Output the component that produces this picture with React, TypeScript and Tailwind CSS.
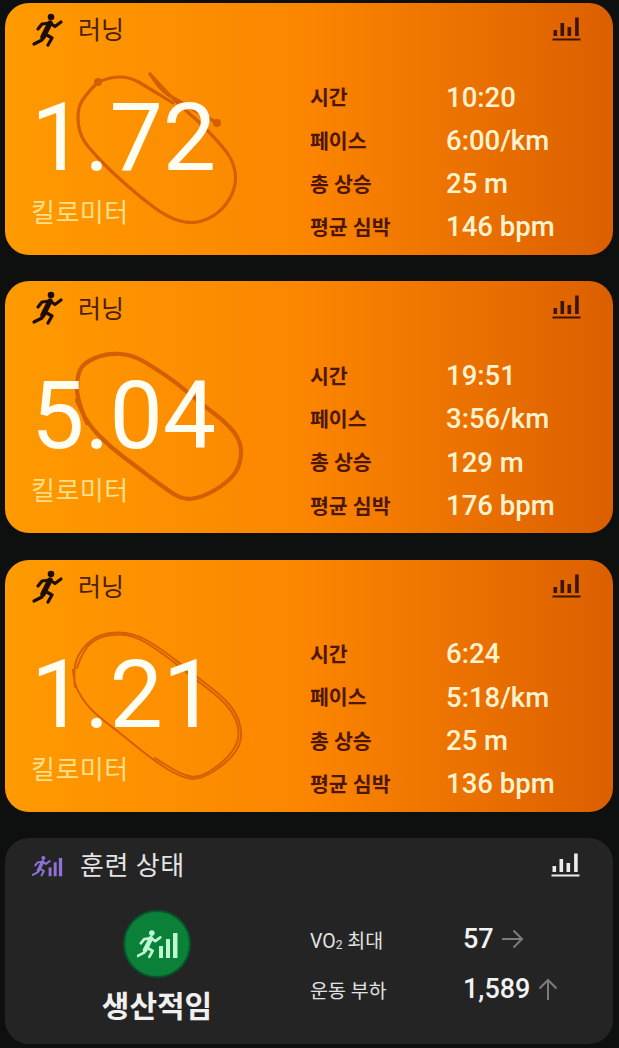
const sans = 'font-["Roboto","Noto_Sans_CJK_KR",sans-serif]';

type Pt = [number, number];

// rounds the corners of a hand-traced route
function smooth(points: Pt[]) {
  let d = `M${points[0][0]} ${points[0][1]}`;
  for (let i = 1; i < points.length - 1; i++) {
    const [x, y] = points[i];
    const [nx, ny] = points[i + 1];
    d += ` Q${x} ${y} ${(x + nx) / 2} ${(y + ny) / 2}`;
  }
  const last = points[points.length - 1];
  return `${d} L${last[0]} ${last[1]}`;
}

const runs: {
  distance: string;
  rows: string[][];
  routes: Pt[][];
  dots: Pt[];
  width: number;
}[] = [
  {
    distance: '1.72',
    rows: [
      ['시간', '10:20'],
      ['페이스', '6:00/km'],
      ['총 상승', '25 m'],
      ['평균 심박', '146 bpm'],
    ],
    routes: [
      [[93, 79], [78, 94], [72, 110], [75, 134], [92, 154], [108, 170], [135, 194], [162, 214], [185, 221], [205, 216], [222, 202], [232, 180], [228, 157], [212, 137], [192, 117], [172, 100], [145, 71]],
      [[145, 71], [155, 87], [172, 97], [212, 120]],
      [[93, 79], [105, 74], [125, 74], [142, 84], [168, 100]],
    ],
    dots: [[93, 79], [212, 120]],
    width: 3.2,
  },
  {
    distance: '5.04',
    rows: [
      ['시간', '19:51'],
      ['페이스', '3:56/km'],
      ['총 상승', '129 m'],
      ['평균 심박', '176 bpm'],
    ],
    routes: [
      [[82, 142], [72, 119], [72, 96], [78, 82], [102, 72], [128, 74], [148, 86], [172, 102], [195, 122], [222, 142], [237, 162], [235, 186], [222, 202], [198, 216], [178, 219], [158, 206], [132, 186], [105, 166], [82, 142], [72, 119]],
    ],
    dots: [],
    width: 4.2,
  },
  {
    distance: '1.21',
    rows: [
      ['시간', '6:24'],
      ['페이스', '5:18/km'],
      ['총 상승', '25 m'],
      ['평균 심박', '136 bpm'],
    ],
    routes: [
      [[70, 127], [68, 110], [75, 90], [95, 73], [128, 72], [158, 90], [192, 117], [222, 140], [235, 160], [237, 183], [222, 203], [195, 220], [175, 217], [148, 200], [115, 173], [85, 150], [70, 127], [68, 110]],
      [[72, 108], [78, 89], [97, 75], [127, 74], [156, 92], [190, 119], [220, 142], [233, 162], [234, 182], [220, 201], [195, 218], [177, 215], [150, 198]],
    ],
    dots: [],
    width: 2,
  },
];

function RunnerShape() {
  return (
    <>
      <circle cx="21" cy="6" r="3.3" fill="currentColor" stroke="none" />
      <path d="M20 12 L13 26" strokeWidth="5.4" />
      <path d="M20 12 L25 15.5 L31 11" />
      <path d="M20 12 L12 13 L8 18" />
      <path d="M13 25 L12 29 L4 33" />
      <path d="M15 23 L22 27 L18 34" />
    </>
  );
}

function RunnerIcon({ className }: { className: string }) {
  return (
    <svg viewBox="0 0 36 36" className={className} fill="none" stroke="currentColor" strokeWidth="3.2" strokeLinecap="round" strokeLinejoin="round">
      <RunnerShape />
    </svg>
  );
}

function ChartIcon({ className }: { className: string }) {
  return (
    <svg viewBox="0 0 28 24" className={className} fill="currentColor">
      <rect x="1" y="13" width="3.6" height="6" />
      <rect x="8" y="6" width="3.6" height="13" />
      <rect x="15" y="10" width="3.6" height="9" />
      <rect x="22.6" y="0.5" width="3.6" height="18.5" />
      <rect x="0" y="21.5" width="28" height="2" />
    </svg>
  );
}

function StatusIcon({ className }: { className: string }) {
  return (
    <svg viewBox="0 0 41 30" className={className} fill="currentColor">
      <g transform="translate(-3 -1) scale(0.85)" fill="none" stroke="currentColor" strokeWidth="3.2" strokeLinecap="round" strokeLinejoin="round">
        <RunnerShape />
      </g>
      <rect x="22" y="17" width="4" height="12" />
      <rect x="29" y="10" width="4" height="19" />
      <rect x="36" y="4" width="4.5" height="25" />
    </svg>
  );
}

function RunCard({ run }: { run: (typeof runs)[number] }) {
  return (
    <div className="relative h-[252px] overflow-hidden rounded-[24px] bg-gradient-to-r from-[#ff9a00] via-[#fb8500] to-[#dc5f00]">
      {/* route drawn behind the numbers */}
      <svg viewBox="0 0 608 252" className="absolute inset-0 h-full w-full" fill="none">
        {run.routes.map((pts) => (
          <path key={pts.join()} d={smooth(pts)} stroke="#d25f00" strokeWidth={run.width} strokeLinejoin="round" strokeLinecap="round" />
        ))}
        {run.dots.map(([cx, cy]) => (
          <circle key={cx} cx={cx} cy={cy} r="4" fill="#d25f00" />
        ))}
      </svg>

      <div className="relative flex h-full flex-col">
        <div className="flex h-[54px] items-center justify-between pl-[25px] pr-[32px]">
          <div className="flex items-center gap-[12px]">
            <RunnerIcon className="-mt-[2px] h-[36px] w-[36px] text-[#1e0e00]" />
            <span className={`${sans} mt-[2px] text-[25px] text-[#4a2000]`}>러닝</span>
          </div>
          <ChartIcon className="-mt-[2px] h-[24px] w-[29px] text-[#3c1500]" />
        </div>

        <div className="flex flex-1">
          <div className="w-[305px] pl-[26px]">
            <div className={`${sans} mt-[25px] h-[112px] text-[95px] font-[450] leading-[112px] text-[#fffdf2]`}>{run.distance}</div>
            <div className={`${sans} mt-[3px] text-[26px] leading-[32px] tracking-[0.5px] text-[#ffdf87]`}>킬로미터</div>
          </div>
          <div className="grid grid-cols-[137px_auto] content-start pt-[20px]">
            {run.rows.map(([label, value]) => (
              <div key={label} className="col-span-2 grid h-[43.3px] grid-cols-subgrid items-center">
                <span className={`${sans} text-[20.5px] font-bold text-[#4d1600]`}>{label}</span>
                <span className={`${sans} -mt-[3px] -ml-[1px] text-[27.5px] font-medium text-[#fff3cf]`}>{value}</span>
              </div>
            ))}
          </div>
        </div>
      </div>
    </div>
  );
}

export default function App() {
  return (
    <div className="flex h-[1048px] w-[619px] flex-col gap-[26.4px] overflow-hidden bg-[#0e0f0f] pl-[5px] pr-[6px] pt-[3px]">
      {runs.map((run) => (
        <RunCard key={run.distance + run.rows[0][1]} run={run} />
      ))}

      <div className="flex h-[206px] flex-col rounded-[24px] bg-[#242424]">
        <div className="flex h-[54px] items-center justify-between pl-[27px] pr-[33px]">
          <div className="mt-[2px] flex items-center gap-[17px]">
            <StatusIcon className="h-[22px] w-[31px] text-[#8f72d8]" />
            <span className={`${sans} text-[26px] tracking-[0.5px] text-[#e4e4e4]`}>훈련 상태</span>
          </div>
          <ChartIcon className="h-[24px] w-[29px] text-[#ececec]" />
        </div>

        <div className="flex flex-1">
          <div className="flex w-[304px] flex-col items-center pt-[18px]">
            <div className="flex h-[68px] w-[68px] items-center justify-center rounded-full border-2 border-[#06552a] bg-[#0a8039]">
              <StatusIcon className="h-[30px] w-[41px] text-[#bdf7d2]" />
            </div>
            <div className={`${sans} mt-[9px] text-[30px] font-bold leading-[40px] text-[#f0f0f0]`}>생산적임</div>
          </div>
          <div className="ml-[1px] grid grid-cols-[153px_auto] content-start pt-[22px]">
            <div className={`${sans} mt-[5px] flex h-[45px] items-center text-[19.5px] text-[#e2e2e2]`}>
              VO<sub className="text-[12px]">2</sub>&nbsp;최대
            </div>
            <div className="flex h-[50px] items-center gap-[8px]">
              <span className={`${sans} text-[27px] font-medium text-[#f2f2f2]`}>57</span>
              <svg viewBox="0 0 22 22" className="h-[22px] w-[22px] text-[#7c7c7c]" fill="none" stroke="currentColor" strokeWidth="2">
                <path d="M0 11 H20 M11.5 2.5 L20 11 L11.5 19.5" />
              </svg>
            </div>
            <div className={`${sans} mt-[5px] flex h-[45px] items-center text-[19.5px] text-[#e2e2e2]`}>운동 부하</div>
            <div className="flex h-[50px] items-center gap-[7px]">
              <span className={`${sans} text-[27px] font-medium text-[#f2f2f2]`}>1,589</span>
              <svg viewBox="0 0 22 22" className="h-[22px] w-[22px] text-[#7c7c7c]" fill="none" stroke="currentColor" strokeWidth="2">
                <path d="M11 22 V2 M2.5 10.5 L11 2 L19.5 10.5" />
              </svg>
            </div>
          </div>
        </div>
      </div>
    </div>
  );
}
